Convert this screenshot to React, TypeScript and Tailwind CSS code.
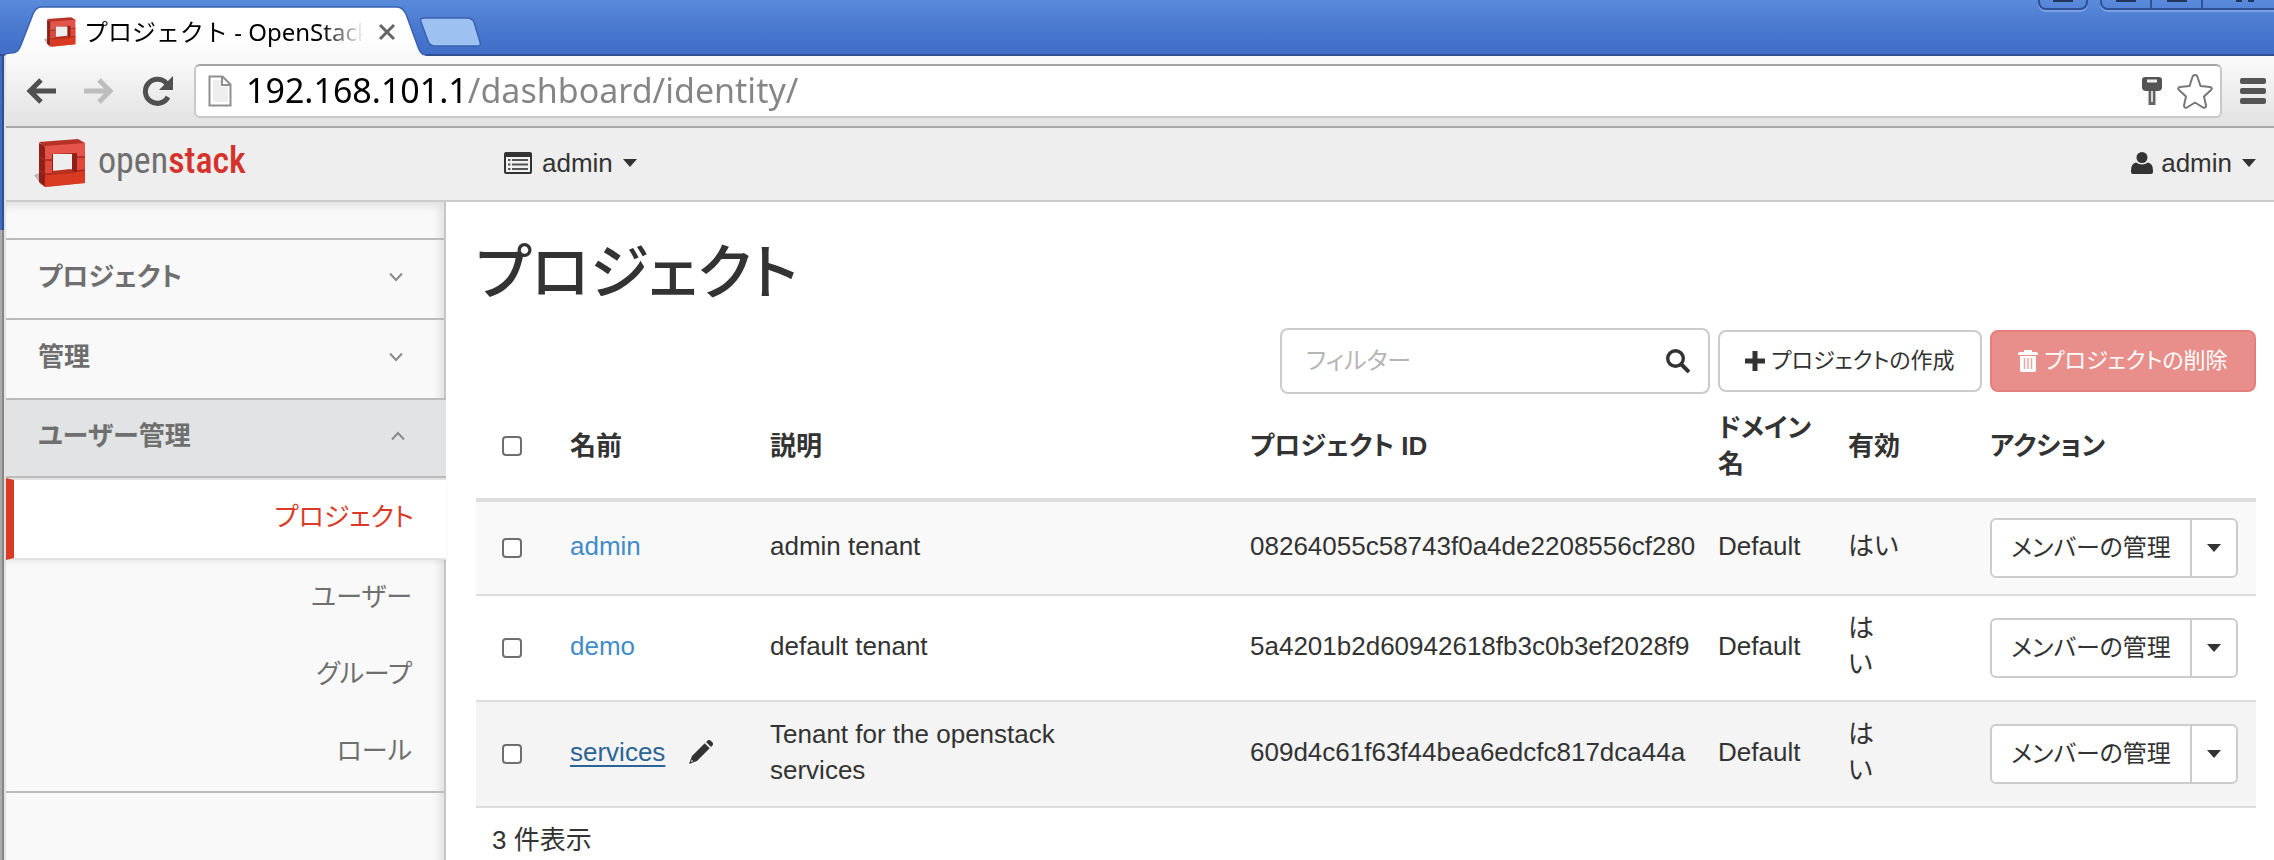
import React from 'react';

const jp = "font-['Liberation_Sans','Noto_Sans_CJK_JP',sans-serif]";

function Caret() {
  return (
    <svg viewBox="0 0 14 8" className="h-2 w-3.5 fill-current" aria-hidden="true">
      <path d="M0 0h14L7 8z" />
    </svg>
  );
}

function Chevron({ up }: { up?: boolean }) {
  return (
    <svg viewBox="0 0 16 10" className="h-2.5 w-4 fill-none stroke-[#8a8a8a] stroke-2" aria-hidden="true">
      <path d={up ? 'M2 8.5 8 2l6 6.5' : 'M2 1.5 8 8l6-6.5'} />
    </svg>
  );
}

function StackMark({ className }: { className: string }) {
  return (
    <svg viewBox="0 0 52 48" className={className} aria-hidden="true">
      <path d="M0 36 8 33v14z" fill="#bdb6b4" />
      <path d="M5 4 11 7v41l-6-5z" fill="#8e2018" />
      <path d="M5 3 44 0l7 4v3L11 9z" fill="#b73226" />
      <path d="M11 7 51 4v40l-40 4z" fill="#e4544a" />
      <path d="M11 21 51 18v12l-40 5z" fill="#df483b" />
      <path d="M11 35 51 31v13l-40 4z" fill="#d93a22" />
      <path d="M18 15 43 14v19l-25 1z" fill="#8f2018" />
      <path d="M19 15 38 15v17l-19 2z" fill="#eee" />
      <path d="M18 32 37 30l5 4-24 2z" fill="#b8301f" />
      <path d="M5 18l6 3h7M43 18h8M5 31l6 4h7M43 32l8-1" stroke="#a32a1f" strokeWidth="1.5" fill="none" />
    </svg>
  );
}

function TabStrip() {
  return (
    <div className="relative flex h-14 items-start justify-between border-b-2 border-[#2f4f8f] bg-linear-to-b from-[#5a8ada] via-[#4a79d0] to-[#406ec8]">
      <div className="relative h-14 w-[484px]">
        <svg viewBox="0 0 484 56" className="absolute inset-0 h-14 w-[484px]" aria-hidden="true">
          <defs>
            <linearGradient id="tab" x1="0" y1="0" x2="0" y2="1">
              <stop offset="0.5" stopColor="#fff" />
              <stop offset="1" stopColor="#f9f9f9" />
            </linearGradient>
          </defs>
          <path
            d="M4 57c0-3 2-4 7-4 6 0 8-3 10-8L33 14c2-5 4-7 8-7h356c5 0 7 3 9 7l12 33c2 6 4 8 8 8v2z"
            fill="url(#tab)"
            stroke="#3a62ad"
            strokeWidth="1.5"
          />
          <path
            d="M424 18h43c4 0 6 2 7 4l6 20c1 3 0 4-3 4h-42c-4 0-6-2-7-5l-7-19c-1-3 0-4 3-4z"
            fill="#9dc1f0"
            stroke="#3a62ad"
            strokeWidth="1.5"
          />
        </svg>
        <div className="relative flex h-14 items-center pt-2 pl-11">
          <StackMark className="h-8 w-8" />
          <span className="ml-2 w-[280px] overflow-hidden bg-linear-to-r from-black from-85% to-transparent bg-clip-text font-['Noto_Sans','Noto_Sans_CJK_JP',sans-serif] text-2xl leading-8 whitespace-nowrap text-transparent [font-feature-settings:normal]">
            プロジェクト - OpenStack
          </span>
          <button aria-label="タブを閉じる" className="ml-3.5">
            <svg viewBox="0 0 18 18" className="h-[18px] w-[18px] fill-none stroke-[#666] stroke-3">
              <path d="M2 2l14 14M16 2 2 16" />
            </svg>
          </button>
        </div>
      </div>
      <div className="flex items-start">
        <button aria-label="ユーザー" className="mr-3 flex h-2.5 w-[50px] justify-center rounded-b-lg border-2 border-t-0 border-[#2f5296] shadow-[0_2px_0_#7da2e2]">
          <span className="h-0.5 w-5 bg-[#22355c]" />
        </button>
        <button aria-label="最小化" className="flex h-2.5 w-[52px] justify-center rounded-bl-lg border-2 border-t-0 border-[#2f5296] shadow-[0_2px_0_#7da2e2]">
          <span className="h-0.5 w-5 bg-[#22355c]" />
        </button>
        <button aria-label="最大化" className="flex h-2.5 w-[51px] justify-center border-r-2 border-b-2 border-[#2f5296] shadow-[0_2px_0_#7da2e2]">
          <span className="h-0.5 w-5 bg-[#22355c]" />
        </button>
        <button aria-label="閉じる" className="flex h-2.5 w-[71px] justify-center gap-1.5 border-b-2 border-[#2f5296] pl-3 shadow-[0_2px_0_#7da2e2]">
          <span className="h-0.5 w-1.5 bg-[#22355c]" />
          <span className="h-0.5 w-1.5 bg-[#22355c]" />
        </button>
      </div>
    </div>
  );
}

function Toolbar() {
  return (
    <div className="flex h-18 items-center border-b-2 border-[#a9a9a9] bg-linear-to-b from-[#fafafa] to-[#e2e2e2] pr-2 pl-5">
      <button aria-label="戻る">
        <svg viewBox="0 0 30 26" className="h-[26px] w-[30px] fill-none stroke-[#505050] stroke-5">
          <path d="M15 2 4 13l11 11M4 13h26" />
        </svg>
      </button>
      <button aria-label="進む" className="ml-7">
        <svg viewBox="0 0 30 26" className="h-[26px] w-[30px] fill-none stroke-[#bdbdbd] stroke-5">
          <path d="M15 2l11 11-11 11M26 13H0" />
        </svg>
      </button>
      <button aria-label="再読み込み" className="ml-7">
        <svg viewBox="0 0 32 30" className="h-[30px] w-8">
          <path d="M24.5 7.5A12 12 0 1 0 26 21" fill="none" stroke="#505050" strokeWidth="5" />
          <path d="M31 0v14H17z" fill="#505050" />
        </svg>
      </button>
      <div className="ml-5 flex h-[54px] flex-1 items-center rounded-md border-2 border-[#c8c8c8] border-t-[#a5a5a5] bg-white pr-1.5 pl-3">
        <svg viewBox="0 0 24 32" className="h-8 w-6 shrink-0" aria-hidden="true">
          <path d="M1.5 1.5h13l8 8v21h-21z" fill="#fff" stroke="#8f8f8f" strokeWidth="2" />
          <path d="M5 5h8v7h7v15H5z" fill="#eee" />
          <path d="M14 2v8h8" fill="none" stroke="#8f8f8f" strokeWidth="2" />
        </svg>
        <input
          aria-label="アドレス"
          defaultValue="192.168.101.1/dashboard/identity/"
          className="ml-3.5 h-12 min-w-0 flex-1 bg-linear-to-r from-black from-[222px] to-[#858585] to-[222px] bg-clip-text pb-0.5 font-['Noto_Sans',sans-serif] text-[34px] text-transparent outline-none"
        />
        <svg viewBox="0 0 20 28" className="h-7 w-5" aria-hidden="true">
          <path d="M3 0h14q3 0 3 3v7q0 4-4 4H4q-4 0-4-4V3q0-3 3-3z" fill="#555" />
          <path d="M5 2.5h10v3H5z" fill="#eee" />
          <path d="M6.500 14h7v14h-7z" fill="#666" />
          <path d="M9 14h2v11H9z" fill="#d8d8d8" />
        </svg>
        <button aria-label="ブックマーク" className="ml-3.5">
          <svg viewBox="0 0 38 36" className="h-9 w-[38px] fill-white stroke-[#777] stroke-2" strokeLinejoin="round">
            <path d="M19 2q2 0 2.500 2l3 9 9.500 1q3 1 1 3l-7 6.500 2 9q0 3-3 2l-8-5-8 5q-3 1-3-2l2-9-7-6.500q-2-2 1-3l9.500-1 3-9q.5-2 2.500-2z" />
          </svg>
        </button>
      </div>
      <button aria-label="メニュー" className="ml-4.5 flex flex-col gap-1">
        <span className="h-1.5 w-[26px] rounded-xs bg-[#555]" />
        <span className="h-1.5 w-[26px] rounded-xs bg-[#555]" />
        <span className="h-1.5 w-[26px] rounded-xs bg-[#555]" />
      </button>
    </div>
  );
}

function Header() {
  return (
    <header className="flex h-[74px] items-center border-b-2 border-[#ccc] bg-[#eee] pr-4.5 pb-0.5 text-[#333]">
      <a href="#home" className="flex w-[498px] items-center pl-7">
        <StackMark className="h-12 w-[52px]" />
        <span className="ml-3 pb-1 font-['Roboto_Condensed','Open_Sans_Condensed',sans-serif] text-4xl leading-10 text-[#6f6f6f]">
          open<span className="font-medium text-[#d5322b]">stack</span>
        </span>
      </a>
      <button className="flex items-center">
        <svg viewBox="0 0 28 22" className="h-[22px] w-7" aria-hidden="true">
          <path d="M2 0h24q2 0 2 2v18q0 2-2 2H2q-2 0-2-2V2q0-2 2-2z" fill="#333" />
          <path d="M2 5h24v15H2z" fill="#f2f2f2" />
          <path d="M4 8h2.500M8 8h16M4 12.500h2.500M8 12.500h16M4 17h2.500M8 17h16" stroke="#555" strokeWidth="2" />
        </svg>
        <span className="mr-2.5 ml-2.5">admin</span>
        <Caret />
      </button>
      <button className="ml-auto flex items-center">
        <svg viewBox="0 0 22 22" className="h-[22px] w-[22px]" aria-hidden="true">
          <circle cx="11" cy="5.500" r="5.500" fill="#333" />
          <path d="M5 10.500q6 4 12 0 5 1 5 8v1.500q0 2-2 2H2q-2 0-2-2v-1.500q0-7 5-8z" fill="#333" />
        </svg>
        <span className="mr-2.5 ml-2">admin</span>
        <Caret />
      </button>
    </header>
  );
}

function Section({ label, open }: { label: string; open?: boolean }) {
  return (
    <button
      className={`flex h-20 w-full items-center justify-between border-t-2 border-[#bbb] pr-10 pb-1 pl-8 font-bold text-[#6f6f6f] ${
        open ? 'relative border-b-2 bg-[#e1e3e4]' : ''
      }`}
    >
      {label}
      <Chevron up={open} />
    </button>
  );
}

function Sidebar() {
  return (
    <nav className="flex w-[440px] shrink-0 flex-col border-r-2 border-[#c6c6c6] bg-[#f9f9f9] pt-9 text-[#6f6f6f] shadow-[inset_-4px_4px_8px_rgba(0,0,0,0.1)]">
      <Section label="プロジェクト" />
      <Section label="管理" />
      <div className="-mr-0.5">
        <Section label="ユーザー管理" open />
      </div>
      <a
        href="#projects"
        className="relative -mr-0.5 flex h-[82px] items-center justify-end border-y-2 border-l-8 border-y-[#e2e2e2] border-l-[#d93b27] bg-white pr-8 pb-1 text-[#d93b27] shadow-[0_3px_4px_rgba(0,0,0,0.05)]"
      >
        プロジェクト
      </a>
      {['ユーザー', 'グループ', 'ロール'].map((t) => (
        <a key={t} href={`#${t}`} className="flex h-[77px] items-center justify-end pr-8 pb-1">
          {t}
        </a>
      ))}
      <div className="border-t-2 border-[#bbb]" />
    </nav>
  );
}

type Project = { name: string; desc: string; id: string; wrap: boolean; hover?: boolean };

const projects: Project[] = [
  { name: 'admin', desc: 'admin tenant', id: '08264055c58743f0a4de2208556cf280', wrap: false },
  { name: 'demo', desc: 'default tenant', id: '5a4201b2d60942618fb3c0b3ef2028f9', wrap: true },
  { name: 'services', desc: 'Tenant for the openstack services', id: '609d4c61f63f44bea6edcfc817dca44a', wrap: true, hover: true },
];

function Check({ label }: { label: string }) {
  return (
    <input
      type="checkbox"
      aria-label={label}
      className="ml-3.5 block h-5 w-5 appearance-none rounded-sm border-2 border-[#6e6e6e] bg-white"
    />
  );
}

function Row({ p, shade }: { p: Project; shade: string }) {
  return (
    <tr className={`border-b-2 border-[#ddd] ${shade}`}>
      <td className="px-3 py-4">
        <Check label={p.name} />
      </td>
      <td className="px-3 pt-3.5 pb-4.5">
        <span className="flex items-center gap-6">
          <a href={`#${p.name}`} className={p.hover ? 'text-[#2a6496] underline decoration-2 underline-offset-4' : 'text-[#428bca]'}>
            {p.name}
          </a>
          {p.hover && (
            <button aria-label="編集">
              <svg viewBox="0 0 24 24" className="h-6 w-6 fill-[#333]">
                <path
                  fillRule="evenodd"
                  d="M17 2 19 .3q1.300-.8 2.500.3l2 2q1 1.300.2 2.600L22 7zM15.700 3.300l5 5L8 21 0 24l3-8zM2.800 19.700l-.9 2.400 2.400-.9z"
                />
              </svg>
            </button>
          )}
        </span>
      </td>
      <td className="px-3 pt-3.5 pb-4.5">
        <p className="max-w-[340px]">{p.desc}</p>
      </td>
      <td className="px-3 pt-3.5 pb-4.5">{p.id}</td>
      <td className="px-3 pt-3.5 pb-4.5">Default</td>
      <td className="px-3 pt-3.5 pb-4.5">
        <p className={p.wrap ? 'w-7' : ''}>はい</p>
      </td>
      <td className="px-3 py-4">
        <div className="flex h-15 w-[248px] rounded-md border-2 border-[#ccc] bg-white">
          <button className="flex-1 text-2xl whitespace-nowrap">メンバーの管理</button>
          <button aria-label="その他の操作" className="flex w-[46px] items-center justify-center border-l-2 border-[#ccc]">
            <Caret />
          </button>
        </div>
      </td>
    </tr>
  );
}

function Main() {
  return (
    <main className="min-w-0 flex-1 bg-white pr-4.5 pl-[30px] text-[#333]">
      <h1 className="pt-8 text-[60px] leading-20 font-medium">プロジェクト</h1>
      <div className="mt-3.5 flex items-center justify-end gap-2">
        <div className="flex h-[66px] w-[430px] items-center rounded-lg border-2 border-[#ccc] pr-4.5 pl-6">
          <input
            aria-label="フィルター"
            placeholder="フィルター"
            className="min-w-0 flex-1 text-2xl outline-none placeholder:text-[#b5b5b5]"
          />
          <button aria-label="検索">
            <svg viewBox="0 0 24 24" className="h-6 w-6 fill-none stroke-[#333]">
              <circle cx="9.500" cy="9.500" r="7.800" strokeWidth="3.400" />
              <path d="M15 15l8 8" strokeWidth="4" />
            </svg>
          </button>
        </div>
        <button className="flex h-[62px] w-[264px] items-center justify-center gap-1.5 rounded-lg border-2 border-[#ccc] text-[22px] whitespace-nowrap">
          <svg viewBox="0 0 20 20" className="h-5 w-5 shrink-0 fill-[#333]" aria-hidden="true">
            <path d="M7.500 0h5v7.500H20v5h-7.500V20h-5v-7.500H0v-5h7.500z" />
          </svg>
          プロジェクトの作成
        </button>
        <button className="flex h-[62px] w-[266px] items-center justify-center gap-1.5 rounded-lg border-2 border-[#e57f7d] bg-[#e88f8c] text-[22px] whitespace-nowrap text-white">
          <svg viewBox="0 0 20 22" className="h-[22px] w-5 shrink-0" aria-hidden="true">
            <path d="M6 0h8v2h4q2 0 2 3H0q0-3 2-3h4zM2 6h16v14q0 2-2 2H4q-2 0-2-2z" fill="#fff" />
            <path d="M6.500 8v11M10 8v11M13.500 8v11" stroke="#eda8a6" strokeWidth="1.500" />
          </svg>
          プロジェクトの削除
        </button>
      </div>
      <table className="w-full table-fixed text-left">
        <thead>
          <tr className="h-[106px] border-b-4 border-[#ddd]">
            <th className="w-[82px] px-3">
              <Check label="すべて選択" />
            </th>
            <th className="w-[200px] px-3">名前</th>
            <th className="px-3">説明</th>
            <th className="w-[468px] px-3">プロジェクト ID</th>
            <th className="w-[130px] px-3 whitespace-nowrap">ドメイン<br />名</th>
            <th className="w-[142px] px-3">有効</th>
            <th className="w-[278px] px-3">アクション</th>
          </tr>
        </thead>
        <tbody>
          <Row p={projects[0]} shade="bg-[#f9f9f9]" />
          <Row p={projects[1]} shade="bg-white" />
          <Row p={projects[2]} shade="bg-[#f4f4f4]" />
        </tbody>
      </table>
      <p className="px-4 py-3.5">3 件表示</p>
    </main>
  );
}

export default function App() {
  return (
    <div className={`flex min-h-screen flex-col ${jp} text-[26px] leading-9 [font-feature-settings:'palt']`}>
      <TabStrip />
      <div className="flex flex-1">
        <div className="flex w-1.5 shrink-0 flex-col border-r-2 border-[#e2e2e2]">
          <div className="h-[174px] border-r-2 border-[#2f4f8f] bg-[#3f6bc0]" />
          <div className="flex-1 border-r-2 border-[#868686] bg-[#ababab]" />
        </div>
        <div className="flex min-w-0 flex-1 flex-col">
          <Toolbar />
          <Header />
          <div className="flex flex-1">
            <Sidebar />
            <Main />
          </div>
        </div>
      </div>
    </div>
  );
}
